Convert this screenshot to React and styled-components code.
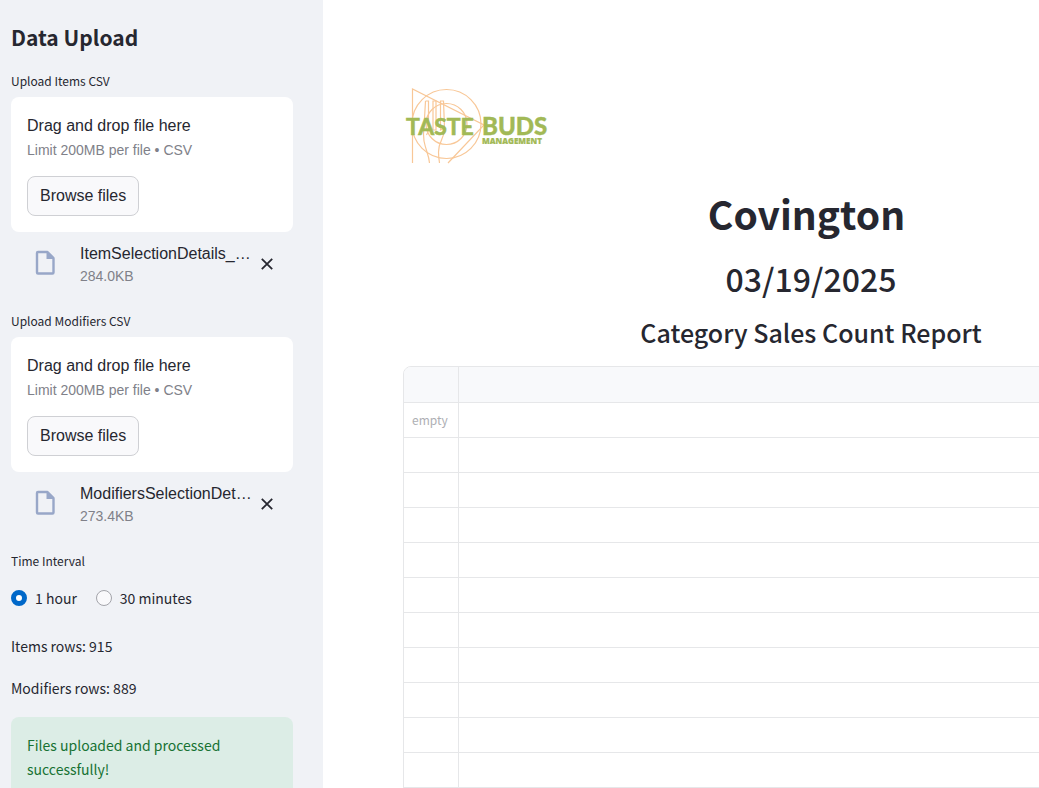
import React, { useState } from "react";
import styled, { createGlobalStyle } from "styled-components";

const sans = '"Noto Sans CJK JP", "Noto Sans", sans-serif';
const arial = '"Liberation Sans", Arial, sans-serif';

const GlobalStyle = createGlobalStyle`
  *, *::before, *::after { box-sizing: border-box; }
  body {
    margin: 0;
    background: #ffffff;
    color: #262730;
    font-family: ${sans};
    font-size: 14px;
    line-height: 24px;
  }
  h1, h2, h3, p { margin: 0; }
`;

const Shell = styled.div`
  display: flex;
  height: 100vh;
  overflow: hidden;
`;

const Sidebar = styled.aside`
  flex: 0 0 323px;
  padding: 23px 30px 24px 11px;
  background: #f0f2f6;
  overflow-y: auto;
  scrollbar-width: none;
`;

const SidebarTitle = styled.h2`
  margin-bottom: 18px;
  font-size: 21px;
  font-weight: 700;
  line-height: 28px;
`;

const Uploader = styled.section`
  margin-bottom: 16px;
`;

const FieldLabel = styled.label`
  display: block;
  margin-bottom: 4px;
  font-size: 12px;
  line-height: 24px;
`;

const Dropzone = styled.div`
  padding: 17px 16px 16px;
  border-radius: 8px;
  background: #ffffff;
  font-family: ${arial};
`;

const DropText = styled.p`
  font-size: 16px;
  line-height: 24px;
`;

const DropHint = styled.p`
  margin: 2px 0 16px;
  color: #808189;
  font-size: 14px;
  line-height: 20px;
`;

const BrowseButton = styled.button`
  height: 40px;
  padding: 0 12px;
  border: 1px solid #cfd0d4;
  border-radius: 8px;
  background: #f9f9fb;
  color: #262730;
  font-family: ${arial};
  font-size: 16px;
  line-height: 24px;
`;

const FileRow = styled.div`
  display: flex;
  align-items: flex-start;
  height: 61px;
  padding: 10px 20px 0 24px;
  font-family: ${arial};
`;

const IconSlot = styled.span`
  display: flex;
  margin-top: 8px;
`;

const FileInfo = styled.div`
  flex: 1;
  min-width: 0;
  margin-left: 24px;
  white-space: nowrap;
`;

const FileName = styled.div`
  font-size: 16px;
  line-height: 24px;
`;

const FileSize = styled.div`
  color: #808189;
  font-size: 14px;
  line-height: 20px;
`;

const RemoveButton = styled.button`
  display: flex;
  margin-top: 15px;
  padding: 0;
  border: 0;
  background: none;
  color: #262730;
`;

const RadioGroup = styled.fieldset`
  min-width: 0;
  margin: 0 0 24px;
  padding: 0;
  border: 0;
`;

const RadioLegend = styled.legend`
  margin-bottom: 13px;
  padding: 0;
  font-size: 12px;
  line-height: 24px;
`;

const RadioOptions = styled.div`
  display: flex;
  gap: 19px;
`;

const RadioOption = styled.label`
  display: flex;
  align-items: center;
  gap: 8px;
`;

const Radio = styled.input`
  appearance: none;
  width: 16px;
  height: 16px;
  margin: 0;
  border: 1px solid #a3a4aa;
  border-radius: 50%;
  background: #f9f9fb;

  &:checked {
    border: 5px solid #0068c9;
    background: #ffffff;
  }
`;

const Stats = styled.div`
  display: grid;
  gap: 18px;
  margin-bottom: 17px;
`;

const Alert = styled.div`
  padding: 16px;
  border-radius: 8px;
  background: #dcede6;
  color: #177233;
`;

const Main = styled.main`
  flex: 1;
  min-width: 0;
  padding: 84px 0 0 80px;
  overflow: auto;
  scrollbar-width: none;
`;

const Report = styled.div`
  min-width: 816px;
`;

const Logo = styled.svg`
  display: block;
  width: 150px;
  height: 84px;
`;

const Store = styled.h1`
  margin-top: 19px;
  padding-right: 9px;
  font-size: 39px;
  font-weight: 700;
  line-height: 52px;
  text-align: center;
`;

const ReportDate = styled.h2`
  margin-top: 17px;
  font-size: 32px;
  font-weight: 500;
  line-height: 44px;
  text-align: center;
`;

const ReportTitle = styled.h3`
  margin: 15px 0 17px;
  font-size: 25px;
  font-weight: 500;
  line-height: 34px;
  text-align: center;
`;

const Grid = styled.table`
  width: 100%;
  border: 1px solid #e6e7e9;
  border-radius: 8px 0 0 0;
  border-spacing: 0;
  table-layout: fixed;
  overflow: hidden;

  th, td {
    padding: 0 8px;
    border-bottom: 1px solid #e6e7e9;
    font-size: 12px;
    font-weight: 400;
    text-align: left;
  }

  th { height: 36px; background: #f8f9fb; }
  td { height: 35px; color: #aeafb4; }

  th:first-child, td:first-child {
    width: 55px;
    border-right: 1px solid #e6e7e9;
  }
`;

function FileIcon() {
  return (
    <svg width="21" height="26" viewBox="0 0 21 26" aria-hidden="true">
      <path
        d="M3 2H12.500L18.500 8V22.500A1 1 0 0 1 17.500 23.500H3A1 1 0 0 1 2 22.500V3A1 1 0 0 1 3 2z"
        fill="none"
        stroke="#98a7c8"
        strokeWidth="2.400"
        strokeLinejoin="round"
      />
      <path d="M11.500 1.500l7.500 7.500h-7.500z" fill="#98a7c8" />
    </svg>
  );
}

function CloseIcon() {
  return (
    <svg width="12" height="14" viewBox="0 0 12 14" aria-hidden="true">
      <path d="M0.800 1.800l10.400 10.400M11.200 1.800L0.800 12.200" stroke="currentColor" strokeWidth="1.800" />
    </svg>
  );
}

function CompanyLogo() {
  return (
    <Logo viewBox="0 0 150 84" role="img" aria-label="Taste Buds Management">
      <g fill="none" stroke="#f8c797" strokeWidth="1.200">
        <circle cx="43.500" cy="40" r="34.500" />
        <circle cx="43.500" cy="40" r="20.500" />
        <path d="M9.500 79V5L81 41L45 79" />
        <path d="M22.500 17h3v27q0 4-2 7M22.500 17l-1.500 26q-1 7 0 14q1 5 3 11q2 6 2.500 11" />
        <path d="M30 17h3v29h-3zM37.500 17h3l1 27l-4 2z" />
        <path d="M41.500 44q0 6-3 12q-3 6-3 12q0 5 1 11" />
      </g>
      <g fill="#a2b956" stroke="#a2b956">
        <g fontFamily="Lato, sans-serif">
          <text x="3" y="51" fontSize="23" fontWeight="700" strokeWidth="0.600">TASTE</text>
          <text x="79" y="51" fontSize="24" fontWeight="900" strokeWidth="0.400">BUDS</text>
        </g>
        <text x="79" y="60" fontSize="8" fontWeight="800" strokeWidth="0.200" fontFamily='"Open Sans", sans-serif'>
          MANAGEMENT
        </text>
      </g>
    </Logo>
  );
}

function UploadField({ id, label, file, size }) {
  return (
    <Uploader>
      <FieldLabel htmlFor={id}>{label}</FieldLabel>
      <Dropzone>
        <DropText>Drag and drop file here</DropText>
        <DropHint>Limit 200MB per file • CSV</DropHint>
        <BrowseButton id={id} type="button">Browse files</BrowseButton>
      </Dropzone>
      <FileRow>
        <IconSlot><FileIcon /></IconSlot>
        <FileInfo>
          <FileName>{file}</FileName>
          <FileSize>{size}</FileSize>
        </FileInfo>
        <RemoveButton type="button" aria-label="Remove file"><CloseIcon /></RemoveButton>
      </FileRow>
    </Uploader>
  );
}

const intervals = ["1 hour", "30 minutes"];
const rows = ["empty", ...Array(13).fill("")];

export default function App() {
  const [interval, setInterval] = useState(intervals[0]);

  return (
    <>
      <GlobalStyle />
      <Shell>
        <Sidebar>
          <SidebarTitle>Data Upload</SidebarTitle>
          <UploadField id="items" label="Upload Items CSV" file="ItemSelectionDetails_…" size="284.0KB" />
          <UploadField id="modifiers" label="Upload Modifiers CSV" file="ModifiersSelectionDet…" size="273.4KB" />
          <RadioGroup>
            <RadioLegend>Time Interval</RadioLegend>
            <RadioOptions>
              {intervals.map((name) => (
                <RadioOption key={name}>
                  <Radio
                    type="radio"
                    name="interval"
                    checked={interval === name}
                    onChange={() => setInterval(name)}
                  />
                  {name}
                </RadioOption>
              ))}
            </RadioOptions>
          </RadioGroup>
          <Stats>
            <p>Items rows: 915</p>
            <p>Modifiers rows: 889</p>
          </Stats>
          <Alert role="status">Files uploaded and processed successfully!</Alert>
        </Sidebar>
        <Main>
          <Report>
            <CompanyLogo />
            <Store>Covington</Store>
            <ReportDate>03/19/2025</ReportDate>
            <ReportTitle>Category Sales Count Report</ReportTitle>
            <Grid>
              <thead>
                <tr><th /><th /></tr>
              </thead>
              <tbody>
                {rows.map((text, i) => (
                  <tr key={i}><td>{text}</td><td /></tr>
                ))}
              </tbody>
            </Grid>
          </Report>
        </Main>
      </Shell>
    </>
  );
}
